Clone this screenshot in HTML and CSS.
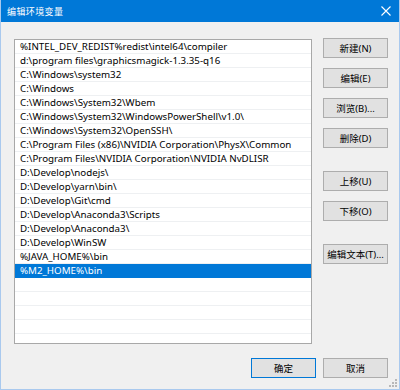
FILE: index.html
```html
<!DOCTYPE html>
<html lang="zh-CN">
<head>
  <meta charset="UTF-8">
  <meta name="viewport" content="width=device-width, initial-scale=1.0">
  <title>编辑环境变量</title>
  <link rel="stylesheet" href="styles.css">
</head>
<body>
  <div class="window">
    <div class="titlebar">
      <span class="title">编辑环境变量</span>
      <svg class="close" width="10" height="10" viewBox="0 0 10 10">
        <path d="M0.5 0.5 L9.5 9.5 M9.5 0.5 L0.5 9.5" stroke="#fff" stroke-width="1.1" fill="none"/>
      </svg>
    </div>

    <div class="content">
      <div class="main">
        <div class="list" id="pathList"></div>

        <div class="side">
          <button class="btn">新建(N)</button>
          <button class="btn">编辑(E)</button>
          <button class="btn">浏览(B)...</button>
          <button class="btn">删除(D)</button>
          <button class="btn group-gap">上移(U)</button>
          <button class="btn">下移(O)</button>
          <button class="btn group-gap">编辑文本(T)...</button>
        </div>
      </div>

      <div class="footer">
        <button class="btn default">确定</button>
        <button class="btn">取消</button>
      </div>
    </div>

    <svg class="grip" width="10" height="10" viewBox="0 0 10 10">
      <rect x="7" y="1" width="2" height="2" fill="#b8b8b8"/>
      <rect x="4" y="4" width="2" height="2" fill="#b8b8b8"/>
      <rect x="7" y="4" width="2" height="2" fill="#b8b8b8"/>
      <rect x="1" y="7" width="2" height="2" fill="#b8b8b8"/>
      <rect x="4" y="7" width="2" height="2" fill="#b8b8b8"/>
      <rect x="7" y="7" width="2" height="2" fill="#b8b8b8"/>
    </svg>
  </div>

  <script>
    const paths = [
      '%INTEL_DEV_REDIST%redist\\intel64\\compiler',
      'd:\\program files\\graphicsmagick-1.3.35-q16',
      'C:\\Windows\\system32',
      'C:\\Windows',
      'C:\\Windows\\System32\\Wbem',
      'C:\\Windows\\System32\\WindowsPowerShell\\v1.0\\',
      'C:\\Windows\\System32\\OpenSSH\\',
      'C:\\Program Files (x86)\\NVIDIA Corporation\\PhysX\\Common',
      'C:\\Program Files\\NVIDIA Corporation\\NVIDIA NvDLISR',
      'D:\\Develop\\nodejs\\',
      'D:\\Develop\\yarn\\bin\\',
      'D:\\Develop\\Git\\cmd',
      'D:\\Develop\\Anaconda3\\Scripts',
      'D:\\Develop\\Anaconda3\\',
      'D:\\Develop\\WinSW',
      '%JAVA_HOME%\\bin',
      '%M2_HOME%\\bin'
    ];
    const list = document.getElementById('pathList');
    const selected = paths.length - 1;
    for (let i = 0; i < paths.length + 5; i++) {
      const row = document.createElement('div');
      row.classList.add('row');
      row.textContent = paths[i] || '';
      if (i === selected) {
        row.classList.add('selected');
      }
      list.appendChild(row);
    }
  </script>
</body>
</html>
```

FILE: styles.css
```css
body {
  margin: 0;
  background-color: #f0f0f0;
  font-family: "Noto Sans", "Noto Sans CJK SC", sans-serif;
}

.window {
  position: relative;
  width: 400px;
  height: 390px;
  box-sizing: border-box;
  border: 1px solid #a9c9ee;
  border-top: none;
  background-color: #f0f0f0;
  display: flex;
  flex-direction: column;
  overflow: hidden;
}

.titlebar {
  height: 22px;
  margin: 0 -1px;
  background-color: #0078d7;
  display: flex;
  align-items: center;
  justify-content: space-between;
  padding: 0 9px 0 7px;
}

.title {
  color: #fff;
  font-family: "Noto Sans CJK SC", sans-serif;
  font-size: 9px;
  letter-spacing: 0.4px;
}

.close {
  display: block;
}

.content {
  padding: 17px 11px 0 13px;
  display: flex;
  flex-direction: column;
}

.main {
  display: flex;
  gap: 11px;
}

.list {
  width: 298px;
  height: 305px;
  box-sizing: border-box;
  border: 1px solid #a8a8a8;
  background-color: #fff;
  overflow: hidden;
}

.row {
  height: 13px;
  line-height: 13px;
  border-bottom: 1px solid #eef0f2;
  padding-left: 5px;
  font-size: 9.75px;
  color: #000;
  white-space: nowrap;
}

.row.selected {
  background-color: #0078d7;
  border-bottom-color: #0078d7;
  color: #fff;
}

.side {
  display: flex;
  flex-direction: column;
  gap: 10px;
  margin-top: -1px;
}

.btn {
  width: 65px;
  height: 20px;
  box-sizing: border-box;
  border: 1px solid #adadad;
  background-color: #e1e1e1;
  font-family: "Noto Sans", "Noto Sans CJK SC", sans-serif;
  font-size: 9.5px;
  color: #000;
  padding: 0;
}

.side .group-gap {
  margin-top: 13px;
}

.footer {
  display: flex;
  justify-content: flex-end;
  gap: 7px;
  margin-top: 14px;
}

.btn.default {
  border-color: #0078d7;
}

.grip {
  position: absolute;
  right: 1px;
  bottom: 1px;
}
```
